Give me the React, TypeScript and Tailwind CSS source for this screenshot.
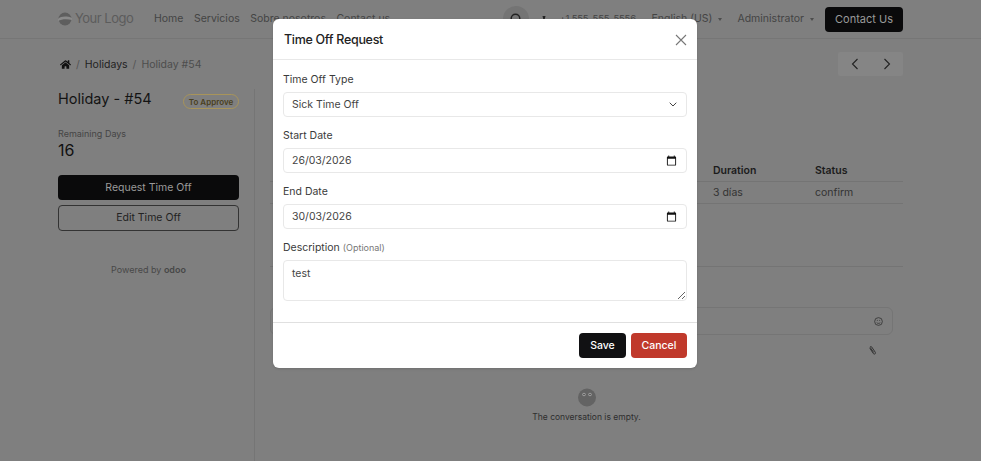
import React from "react";
import { FaHome } from "react-icons/fa";

const Caret = () => <span className="ml-[6px] inline-block h-0 w-0 border-x-[2.5px] border-t-[3px] border-x-transparent border-t-[#4d4d4d]" />;

function Header() {
  return (
    <header className="flex h-[39px] items-center border-b border-[#767676] pl-[58px] pr-[78px] text-[10.5px] text-[#444]">
      <div className="flex w-[96px] items-center gap-[3px]">
        <svg width="14" height="14" viewBox="0 0 14 14">
          <circle cx="7" cy="7" r="6.5" fill="#5e5e5e" />
          <path d="M0 7c3-3 9-3 14-1v2c-5-1-10-1-14 1z" fill="#8a8a8a" />
        </svg>
        <span className="text-[13px] tracking-[-0.5px] text-[#5c5c5c]">Your Logo</span>
      </div>
      <nav className="flex gap-[10.5px]">
        <span>Home</span><span>Servicios</span><span>Sobre nosotros</span><span>Contact us</span>
      </nav>
      <div className="ml-auto flex items-center">
        <span className="mr-[12px] flex h-[26px] w-[26px] items-center justify-center rounded-full bg-[#747474]">
          <svg width="13" height="13" viewBox="0 0 13 13" fill="none" stroke="#222" strokeWidth="1.5"><circle cx="5.5" cy="5.5" r="4.3" /><path d="M9 9l3 3" /></svg>
        </span>
        <svg width="6" height="10" viewBox="0 0 8 10" className="mr-[12px]"><path d="M2 1h4l-1 4 1 4H2l1-4z" fill="#222" /></svg>
        <span className="mr-[14px] w-[78px] whitespace-nowrap text-[9.5px] tracking-[-0.2px]">+1 555-555-5556</span>
        <span className="flex items-center">English (US)<Caret /></span>
        <span className="ml-[15px] flex items-center">Administrator<Caret /></span>
        <span className="ml-[11px] flex h-[25px] w-[78px] items-center justify-center rounded-[4px] bg-[#0a0a0b] text-[11px] text-[#9a9a9a]">Contact Us</span>
      </div>
    </header>
  );
}

function Sidebar() {
  return (
    <aside className="w-[197px] shrink-0 border-r border-[#757575] pr-[15px]">
      <div className="flex items-start justify-between">
        <h1 className="text-[14.5px] leading-[20px] text-[#141414]">Holiday - #54</h1>
        <span className="mt-[5px] flex h-[15px] w-[56px] items-center justify-center rounded-full border border-[#a8945a] text-[8px] font-semibold text-[#4a4020]">To Approve</span>
      </div>
      <div className="mt-[19px] text-[9px] leading-[12px] text-[#454545]">Remaining Days</div>
      <div className="text-[16px] leading-[20px] text-[#111]">16</div>
      <div className="mt-[15px] flex h-[25px] items-center justify-center rounded-[4px] bg-[#0a0a0b] text-[10.5px] text-[#9a9a9a]">Request Time Off</div>
      <div className="mt-[5px] flex h-[26px] items-center justify-center rounded-[4px] border border-[#333] text-[10.5px] text-[#222]">Edit Time Off</div>
      <div className="mt-[32px] text-center text-[9px] text-[#484848]">Powered by <span className="font-semibold text-[#484848]">odoo</span></div>
    </aside>
  );
}

function Main() {
  return (
    <main className="flex min-w-0 flex-1 flex-col pl-[15px]">
      <div className="mt-[72px] grid grid-cols-[1fr_102px_88px] border-b border-[#747474] text-[10.5px] leading-[20px]">
        <span /><b className="font-semibold text-[#1c1c1c]">Duration</b><b className="font-semibold text-[#1c1c1c]">Status</b>
      </div>
      <div className="grid h-[22px] grid-cols-[1fr_102px_88px] items-center border-b border-[#747474] text-[10.5px] text-[#333]">
        <span /><span>3 días</span><span>confirm</span>
      </div>
      <div className="mt-[62px] border-b border-[#747474]" />
      <div className="mr-[10px] mt-[40px] flex h-[28px] items-center justify-end rounded-[6px] border border-[#757575] pr-[9px]">
        <svg width="9" height="9" viewBox="0 0 10 10" fill="none" stroke="#333" strokeWidth="0.9"><circle cx="5" cy="5" r="4.3" /><path d="M3 6.2c1 1.2 3 1.2 4 0M3.2 3.8h1M5.8 3.8h1" /></svg>
      </div>
      <div className="mr-[26px] mt-[10px] flex justify-end">
        <svg width="9" height="10" viewBox="0 0 10 11" fill="none" stroke="#333" strokeWidth="1.1"><path d="M2 3.5l4 6c1 1.3 3 0 2.2-1.3L4 2c-.7-1-2-.2-1.5.8l3.800 5.500" /></svg>
      </div>
      <div className="mt-[33px] flex flex-col items-center">
        <svg width="18" height="19" viewBox="0 0 18 19">
          <circle cx="9" cy="9.5" r="9" fill="#636363" />
          <circle cx="6" cy="6.5" r="1.7" fill="#a0a0a0" /><circle cx="12" cy="6.5" r="1.7" fill="#a0a0a0" />
          <circle cx="6" cy="6.5" r=".7" fill="#333" /><circle cx="12" cy="6.5" r=".7" fill="#333" />
        </svg>
        <span className="mt-[3px] text-[8.5px] leading-[14px] text-[#2e2e2e]">The conversation is empty.</span>
      </div>
    </main>
  );
}

function Label({ children }: { children: React.ReactNode }) {
  return <label className="mb-[3px] block pt-[1px] text-[10.5px] leading-[18px] text-[#3a3a3a]">{children}</label>;
}

const fieldCls = "block h-[25px] w-full rounded-[4px] border border-[#e8e8e8] bg-white px-[8px] text-[10.5px] text-[#444] outline-none";

function DateField({ value }: { value: string }) {
  return (
    <div className="relative mb-[9px]">
      <input type="text" defaultValue={value} className={fieldCls} />
      <svg className="absolute right-[10px] top-[7px]" width="11" height="11" viewBox="0 0 24 24" fill="#111">
        <path d="M20 3h-1V1h-2v2H7V1H5v2H4c-1.1 0-2 .9-2 2v16c0 1.1.9 2 2 2h16c1.1 0 2-.9 2-2V5c0-1.1-.9-2-2-2zm0 18H4V8h16v13z" />
      </svg>
    </div>
  );
}

function Modal() {
  return (
    <div className="absolute left-[273px] top-[19px] w-[424px] rounded-[6px] bg-white shadow-sm">
      <div className="flex h-[41px] items-center justify-between border-b border-[#e8e8e8] pl-[11px] pr-[10px] pt-[2px]">
        <h2 className="text-[12.5px] font-medium tracking-[-0.3px] text-[#222]">Time Off Request</h2>
        <svg width="12" height="12" viewBox="0 0 12 12" fill="none" stroke="#777" strokeWidth="1.1"><path d="M1 1l10 10M11 1L1 11" /></svg>
      </div>
      <div className="px-[10px] pt-[10px]">
        <Label>Time Off Type</Label>
        <div className="relative mb-[9px]">
          <select defaultValue="sick" className={`${fieldCls} appearance-none`}>
            <option value="sick">Sick Time Off</option>
          </select>
          <svg className="absolute right-[10px] top-[10px]" width="8" height="5" viewBox="0 0 8 5" fill="none" stroke="#444" strokeWidth="1"><path d="M.7.7L4 4l3.3-3.3" /></svg>
        </div>
        <Label>Start Date</Label>
        <DateField value="26/03/2026" />
        <Label>End Date</Label>
        <DateField value="30/03/2026" />
        <Label>Description <span className="text-[9px] text-[#777]">(Optional)</span></Label>
        <textarea defaultValue="test" className="block h-[41px] w-full rounded-[4px] border border-[#e8e8e8] bg-white px-[8px] py-[4px] text-[10.5px] leading-[18px] text-[#444] outline-none" />
      </div>
      <div className="mt-[21px] flex h-[46px] items-center justify-end gap-[5px] border-t border-[#e0e0e0] px-[10px]">
        <span className="flex h-[25px] w-[47px] items-center justify-center rounded-[4px] bg-[#111113] text-[10.5px] font-medium text-white">Save</span>
        <span className="flex h-[25px] w-[56px] items-center justify-center rounded-[4px] bg-[#c0392b] text-[10.5px] font-medium text-white">Cancel</span>
      </div>
    </div>
  );
}

export default function App() {
  return (
    <div className="relative h-[461px] w-[981px] overflow-hidden bg-[#7f7f7f] font-['Inter',sans-serif]">
      <Header />
      <div className="flex items-center justify-between pl-[60px] pr-[78px] pt-[13px]">
        <div className="flex items-center gap-[5px] pt-[1px] text-[10.5px] text-[#333]">
          <FaHome size={11} color="#111" />
          <span className="text-[#555]">/</span><span className="text-[#222]">Holidays</span><span className="text-[#555]">/</span><span className="text-[#4d4d4d]">Holiday #54</span>
        </div>
        <div className="flex h-[24px] w-[65px] items-center justify-center gap-[24px] rounded-[2px] bg-[#858585]">
          <svg width="8" height="12" viewBox="0 0 8 12" fill="none" stroke="#222" strokeWidth="1.1"><path d="M6.5 1L1.5 6l5 5" /></svg>
          <svg width="8" height="12" viewBox="0 0 8 12" fill="none" stroke="#222" strokeWidth="1.1"><path d="M1.5 1l5 5-5 5" /></svg>
        </div>
      </div>
      <div className="ml-[58px] mr-[78px] mt-[13px] flex h-[372px]">
        <Sidebar />
        <Main />
      </div>
      <Modal />
    </div>
  );
}
